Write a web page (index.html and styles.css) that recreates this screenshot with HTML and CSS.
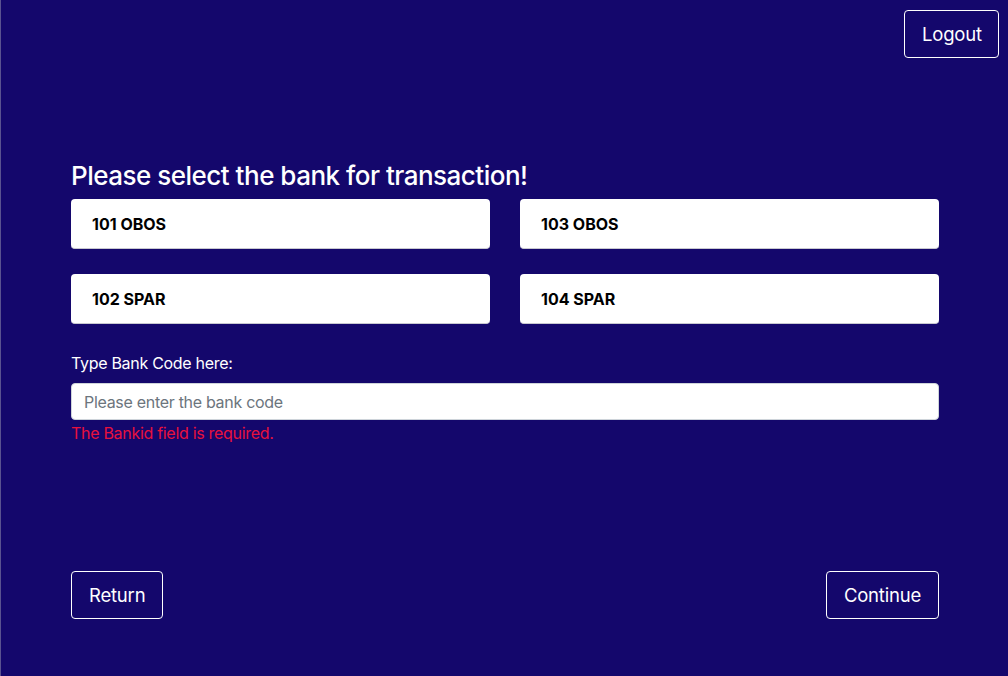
FILE: index.html
```html
<!DOCTYPE html>
<html>
<head>
<meta charset="utf-8">
<link rel="stylesheet" href="styles.css">
</head>
<body>
<div class="page">
  <header class="topbar">
    <button class="btn btn-logout">Logout</button>
  </header>
  <main class="content">
    <h1 class="title">Please select the bank for transaction!</h1>
    <div class="banks">
      <div class="bank">101 OBOS</div>
      <div class="bank">103 OBOS</div>
      <div class="bank">102 SPAR</div>
      <div class="bank">104 SPAR</div>
    </div>
    <label class="label" for="bankcode">Type Bank Code here:</label>
    <input id="bankcode" class="input" type="text" placeholder="Please enter the bank code">
    <div class="error">The Bankid field is required.</div>
    <div class="actions">
      <button class="btn">Return</button>
      <button class="btn">Continue</button>
    </div>
  </main>
</div>
</body>
</html>
```
FILE: styles.css
```css
html, body {
  margin: 0;
  padding: 0;
  height: 100%;
}
body {
  background: #14076c;
  font-family: Inter, "Noto Sans", sans-serif;
  color: #fff;
  border-left: 1px solid #5a5290;
  box-sizing: border-box;
}
.page {
  height: 676px;
  display: flex;
  flex-direction: column;
}
.topbar {
  display: flex;
  justify-content: flex-end;
  padding: 10px 9px 0 0;
}
.btn {
  background: transparent;
  color: #fff;
  border: 1px solid #fff;
  border-radius: 4px;
  font-family: Inter, "Noto Sans", sans-serif;
  font-size: 18.5px;
  letter-spacing: -0.2px;
  padding: 0 17px;
  height: 48px;
  cursor: pointer;
}
.btn-logout {
  width: 95px;
}
.content {
  width: 868px;
  margin-left: 70px;
  margin-top: 102px;
  display: flex;
  flex-direction: column;
  flex: 1;
}
.title {
  font-size: 26px;
  font-weight: 500;
  margin: 0 0 7px 0;
  line-height: 32px;
  letter-spacing: -0.5px;
}
.banks {
  display: grid;
  grid-template-columns: 1fr 1fr;
  column-gap: 30px;
  row-gap: 25px;
}
.bank {
  background: #fff;
  color: #000;
  height: 50px;
  border-radius: 4px;
  box-sizing: border-box;
  border-bottom: 1px solid #c8c8d0;
  padding-left: 21px;
  display: flex;
  align-items: center;
  font-weight: 700;
  font-size: 16px;
}
.label {
  margin-top: 29px;
  font-size: 16px;
  line-height: 20px;
  letter-spacing: -0.3px;
}
.input {
  margin-top: 10px;
  height: 37px;
  box-sizing: border-box;
  border: 1px solid #ced4da;
  border-radius: 4px;
  padding: 0 12px;
  font-family: Inter, "Noto Sans", sans-serif;
  font-size: 16px;
  letter-spacing: -0.3px;
  color: #495057;
  outline: none;
}
.input::placeholder {
  color: #6c757d;
}
.error {
  color: #e8113d;
  font-size: 16px;
  line-height: 20px;
  letter-spacing: -0.3px;
  margin-top: 3px;
}
.actions {
  margin-top: auto;
  margin-bottom: 57px;
  display: flex;
  justify-content: space-between;
}
```
